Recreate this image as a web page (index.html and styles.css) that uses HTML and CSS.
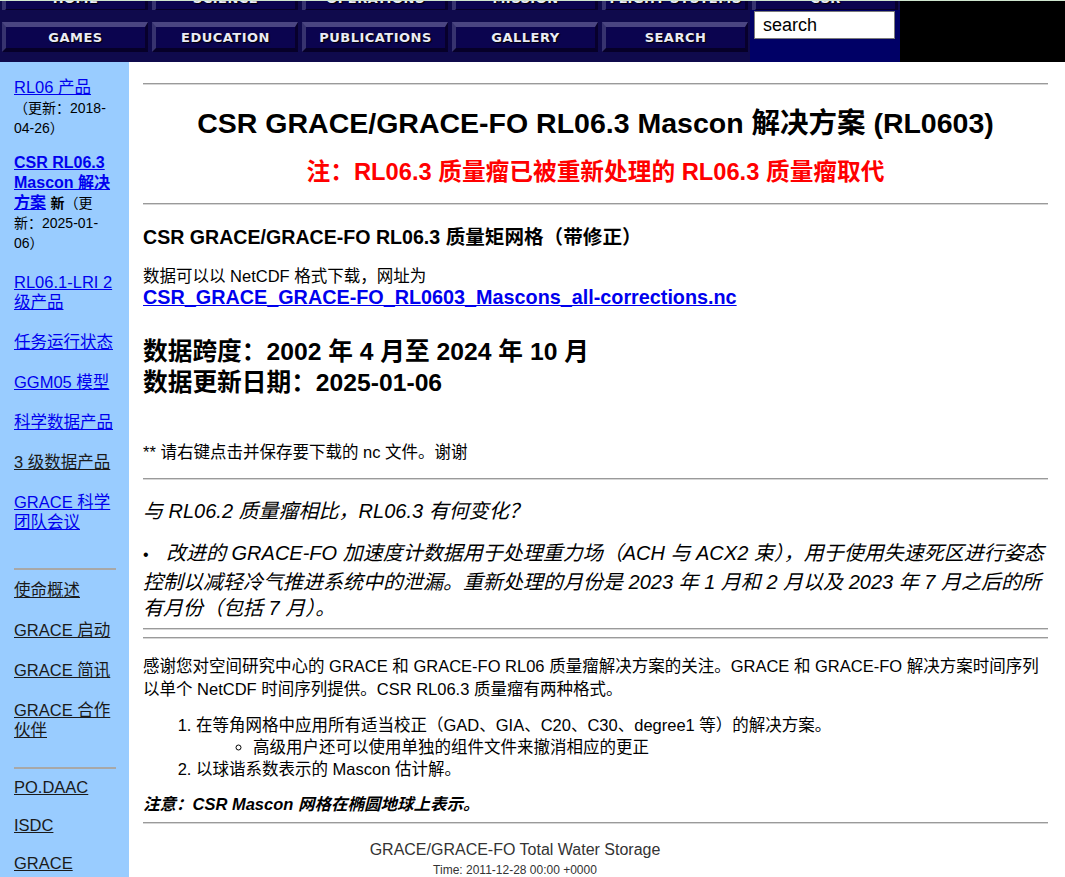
FILE: index.html
```html
<!DOCTYPE html>
<html lang="zh-CN">
<head>
<meta charset="utf-8">
<title>CSR GRACE/GRACE-FO RL06.3 Mascon 解决方案</title>
<link rel="stylesheet" href="styles.css">
</head>
<body>
<header class="topbar">
  <nav class="nav">
    <div class="row row-top">
      <div class="cell"><a class="btn" href="#">HOME</a></div>
      <div class="cell"><a class="btn" href="#">SCIENCE</a></div>
      <div class="cell"><a class="btn" href="#">OPERATIONS</a></div>
      <div class="cell"><a class="btn" href="#">MISSION</a></div>
      <div class="cell"><a class="btn" href="#">FLIGHT SYSTEMS</a></div>
      <div class="cell"><a class="btn" href="#">CSR</a></div>
    </div>
    <div class="row row-main">
      <div class="cell"><a class="btn" href="#">GAMES</a></div>
      <div class="cell"><a class="btn" href="#">EDUCATION</a></div>
      <div class="cell"><a class="btn" href="#">PUBLICATIONS</a></div>
      <div class="cell"><a class="btn" href="#">GALLERY</a></div>
      <div class="cell"><a class="btn" href="#">SEARCH</a></div>
      <form class="search-cell"><input class="search-input" type="text" value="search"></form>
    </div>
  </nav>
  <div class="topbar-fill"></div>
</header>

<div class="layout">
  <aside class="sidebar">
    <p class="side-item first"><a href="#">RL06 产品</a><br><span class="small">（更新：2018-<wbr>04-26）</span></p>
    <p class="side-item"><a class="strong" href="#">CSR RL06.3 Mascon 解决方案</a> <b>新</b><span class="small">（更新：2025-<wbr>01-<wbr>06）</span></p>
    <p class="side-item"><a href="#">RL06.1-LRI 2 级产品</a></p>
    <p class="side-item"><a href="#">任务运行状态</a></p>
    <p class="side-item"><a href="#">GGM05 模型</a></p>
    <p class="side-item"><a href="#">科学数据产品</a></p>
    <p class="side-item"><a class="dark" href="#">3 级数据产品</a></p>
    <p class="side-item"><a href="#">GRACE 科学团队会议</a></p>
    <hr class="side-rule rule-a">
    <p class="side-item"><a class="dark" href="#">使命概述</a></p>
    <p class="side-item"><a class="dark" href="#">GRACE 启动</a></p>
    <p class="side-item"><a class="dark" href="#">GRACE 简讯</a></p>
    <p class="side-item"><a class="dark" href="#">GRACE 合作伙伴</a></p>
    <hr class="side-rule rule-b">
    <p class="side-item tight"><a class="dark" href="#">PO.DAAC</a></p>
    <p class="side-item tight"><a class="dark" href="#">ISDC</a></p>
    <p class="side-item tight"><a class="dark" href="#">GRACE Tellus</a></p>
  </aside>

  <main class="content">
    <hr class="rule rule-top">
    <h1 class="title">CSR GRACE/GRACE-FO RL06.3 Mascon 解决方案 (RL0603)</h1>
    <h2 class="notice">注：RL06.3 质量瘤已被重新处理的 RL06.3 质量瘤取代</h2>
    <hr class="rule rule-2">
    <h3 class="subtitle">CSR GRACE/GRACE-FO RL06.3 质量矩网格（带修正）</h3>
    <p class="download">数据可以以 NetCDF 格式下载，网址为<br><a class="file-link" href="#">CSR_GRACE_GRACE-FO_RL0603_Mascons_all-corrections.nc</a></p>
    <h2 class="span">数据跨度：2002 年 4 月至 2024 年 10 月<br>数据更新日期：2025-01-06</h2>
    <p class="hint">** 请右键点击并保存要下载的 nc 文件。谢谢</p>
    <hr class="rule rule-3">
    <p class="question">与 RL06.2 质量瘤相比，RL06.3 有何变化？</p>
    <ul class="changes">
      <li>改进的 GRACE-FO 加速度计数据用于处理重力场（ACH 与 ACX2 束），用于使用失速死区进行姿态控制以减轻冷气推进系统中的泄漏。重新处理的月份是 2023 年 1 月和 2 月以及 2023 年 7 月之后的所有月份（包括 7 月）。</li>
    </ul>
    <hr class="rule rule-4">
    <hr class="rule rule-5">
    <p class="intro">感谢您对空间研究中心的 GRACE 和 GRACE-FO RL06 质量瘤解决方案的关注。GRACE 和 GRACE-FO 解决方案时间序列以单个 NetCDF 时间序列提供。CSR RL06.3 质量瘤有两种格式。</p>
    <ol class="formats">
      <li>在等角网格中应用所有适当校正（GAD、GIA、C20、C30、degree1 等）的解决方案。
        <ul class="sub">
          <li>高级用户还可以使用单独的组件文件来撤消相应的更正</li>
        </ul>
      </li>
      <li>以球谐系数表示的 Mascon 估计解。</li>
    </ol>
    <p class="note">注意：CSR Mascon 网格在椭圆地球上表示。</p>
    <hr class="rule rule-6">
    <div class="chart">
      <div class="chart-title">GRACE/GRACE-FO Total Water Storage</div>
      <div class="chart-time">Time: 2011-12-28 00:00 +0000</div>
    </div>
  </main>
</div>
</body>
</html>
```

FILE: styles.css
```css
html, body {
  margin: 0;
  padding: 0;
}
body {
  font-family: "Liberation Sans", "Noto Sans CJK SC", sans-serif;
  color: #000;
  background: #fff;
  overflow: hidden;
}

/* ---------- top navigation ---------- */
.topbar {
  display: flex;
  height: 62px;
  border-top: 1px solid #cfe6cf;
  box-sizing: border-box;
  background: #000;
  overflow: hidden;
}
.nav {
  width: 900px;
  background: #0f0a4c;
  display: flex;
  flex-direction: column;
}
.row {
  display: flex;
}
.cell {
  width: 150px;
  box-sizing: border-box;
  padding: 0 2px;
}
.btn {
  display: block;
  height: 30px;
  box-sizing: border-box;
  background: #0b044f;
  border-top: 5px solid #4a4581;
  border-left: 4px solid #37336f;
  border-right: 3px solid #07002c;
  border-bottom: 4px solid #060028;
  color: #ebebf4;
  text-decoration: none;
  text-align: center;
  font-family: "DejaVu Sans", sans-serif;
  font-weight: bold;
  font-size: 13px;
  letter-spacing: 0.5px;
  line-height: 21px;
  text-shadow: 1px 1px 1px #000;
  white-space: nowrap;
}
.row-top {
  height: 9px;
  overflow: hidden;
}
.row-top .btn {
  margin-top: -18px;
  line-height: 21px;
}
.row-main {
  height: 52px;
}
.row-main .cell {
  padding-top: 12px;
}
.search-cell {
  width: 150px;
  margin: 0;
  background: #000066;
  box-sizing: border-box;
  padding: 1px 0 0 4px;
}
.search-input {
  width: 141px;
  height: 28px;
  box-sizing: border-box;
  border: 1px solid #7a7a7a;
  padding: 1px 0 0 8px;
  font-family: "Liberation Sans", sans-serif;
  font-size: 18px;
  color: #000;
  background: #fff;
  outline: none;
}
.topbar-fill {
  flex: 1;
  background: #000;
}

/* ---------- layout ---------- */
.layout {
  display: flex;
  align-items: stretch;
}
.sidebar {
  width: 129px;
  flex: none;
  box-sizing: border-box;
  padding: 15px 13px 40px 14px;
  background: #99ccff;
  min-height: 830px;
}
.content {
  flex: 1;
  padding: 21px 17px 0 14px;
  min-width: 0;
}

/* ---------- sidebar ---------- */
.side-item {
  margin: 0 0 20px;
  font-size: 16.5px;
  line-height: 20px;
}
.side-item a,
.side-item b,
.side-item .small {
  line-height: 1;
}
.side-item a {
  color: #0000ee;
}
.side-item a.strong {
  font-weight: bold;
  font-size: 16px;
}
.side-item a.dark {
  color: #1a1a1a;
}
.side-item b {
  font-size: 14px;
}
.side-item .small {
  font-size: 14px;
}
.side-item.first {
  margin-bottom: 15px;
}
.side-item.tight {
  margin-bottom: 18px;
}
.side-rule {
  border: 0;
  border-top: 2px solid #a8a8a8;
  height: 0;
  margin: 0;
}
.rule-a {
  margin: 36px 0 10px;
}
.rule-b {
  margin: 27px 0 8px;
}

/* ---------- main content ---------- */
.rule {
  border: 0;
  border-top: 1px solid #9a9a9a;
  border-bottom: 1px solid #d6d6d6;
  height: 0;
  margin: 0;
}
.title {
  margin: 23px 0 0;
  text-align: center;
  font-size: 28.5px;
  line-height: 30px;
  font-weight: bold;
}
.notice {
  margin: 21px 0 0;
  text-align: center;
  color: #ff0000;
  font-size: 23.7px;
  line-height: 26px;
  font-weight: bold;
}
.rule-2 {
  margin-top: 18px;
}
.subtitle {
  margin: 21px 0 0;
  font-size: 19.6px;
  line-height: 22px;
  font-weight: bold;
}
.download {
  margin: 17.5px 0 0;
  font-size: 16.5px;
  line-height: 21px;
}
.file-link {
  color: #0000ee;
  font-weight: bold;
  font-size: 19.8px;
}
.span {
  margin: 27px 0 0;
  font-size: 24.7px;
  line-height: 31px;
  font-weight: bold;
}
.hint {
  margin: 44.5px 0 0;
  font-size: 16.5px;
  line-height: 20px;
}
.rule-3 {
  margin-top: 16px;
}
.question {
  margin: 19px 0 0;
  font-style: italic;
  font-size: 20px;
  line-height: 24px;
}
.changes {
  margin: 17px 0 0;
  padding: 0;
  list-style: none;
  font-style: italic;
  font-size: 20px;
  line-height: 26.5px;
}
.changes li::before {
  content: "•";
  display: inline-block;
  width: 23px;
  font-style: normal;
  font-size: 16px;
}
.rule-4 {
  margin-top: 6px;
}
.rule-5 {
  margin-top: 7px;
}
.intro {
  margin: 16.5px 0 0;
  font-size: 16.5px;
  line-height: 23px;
}
.formats {
  margin: 12.5px 0 0;
  padding-left: 53px;
  font-size: 16.5px;
  line-height: 22px;
}
.formats .sub {
  margin: 0;
  padding-left: 57px;
  list-style: circle;
}
.note {
  margin: 14px 0 0;
  font-size: 16.5px;
  line-height: 20px;
  font-weight: bold;
  font-style: italic;
}
.rule-6 {
  margin-top: 8px;
}
.chart {
  width: 744px;
  padding-top: 16px;
  text-align: center;
  color: #333;
}
.chart-title {
  font-size: 16px;
  line-height: 20px;
}
.chart-time {
  font-size: 12px;
  line-height: 20px;
}
```
